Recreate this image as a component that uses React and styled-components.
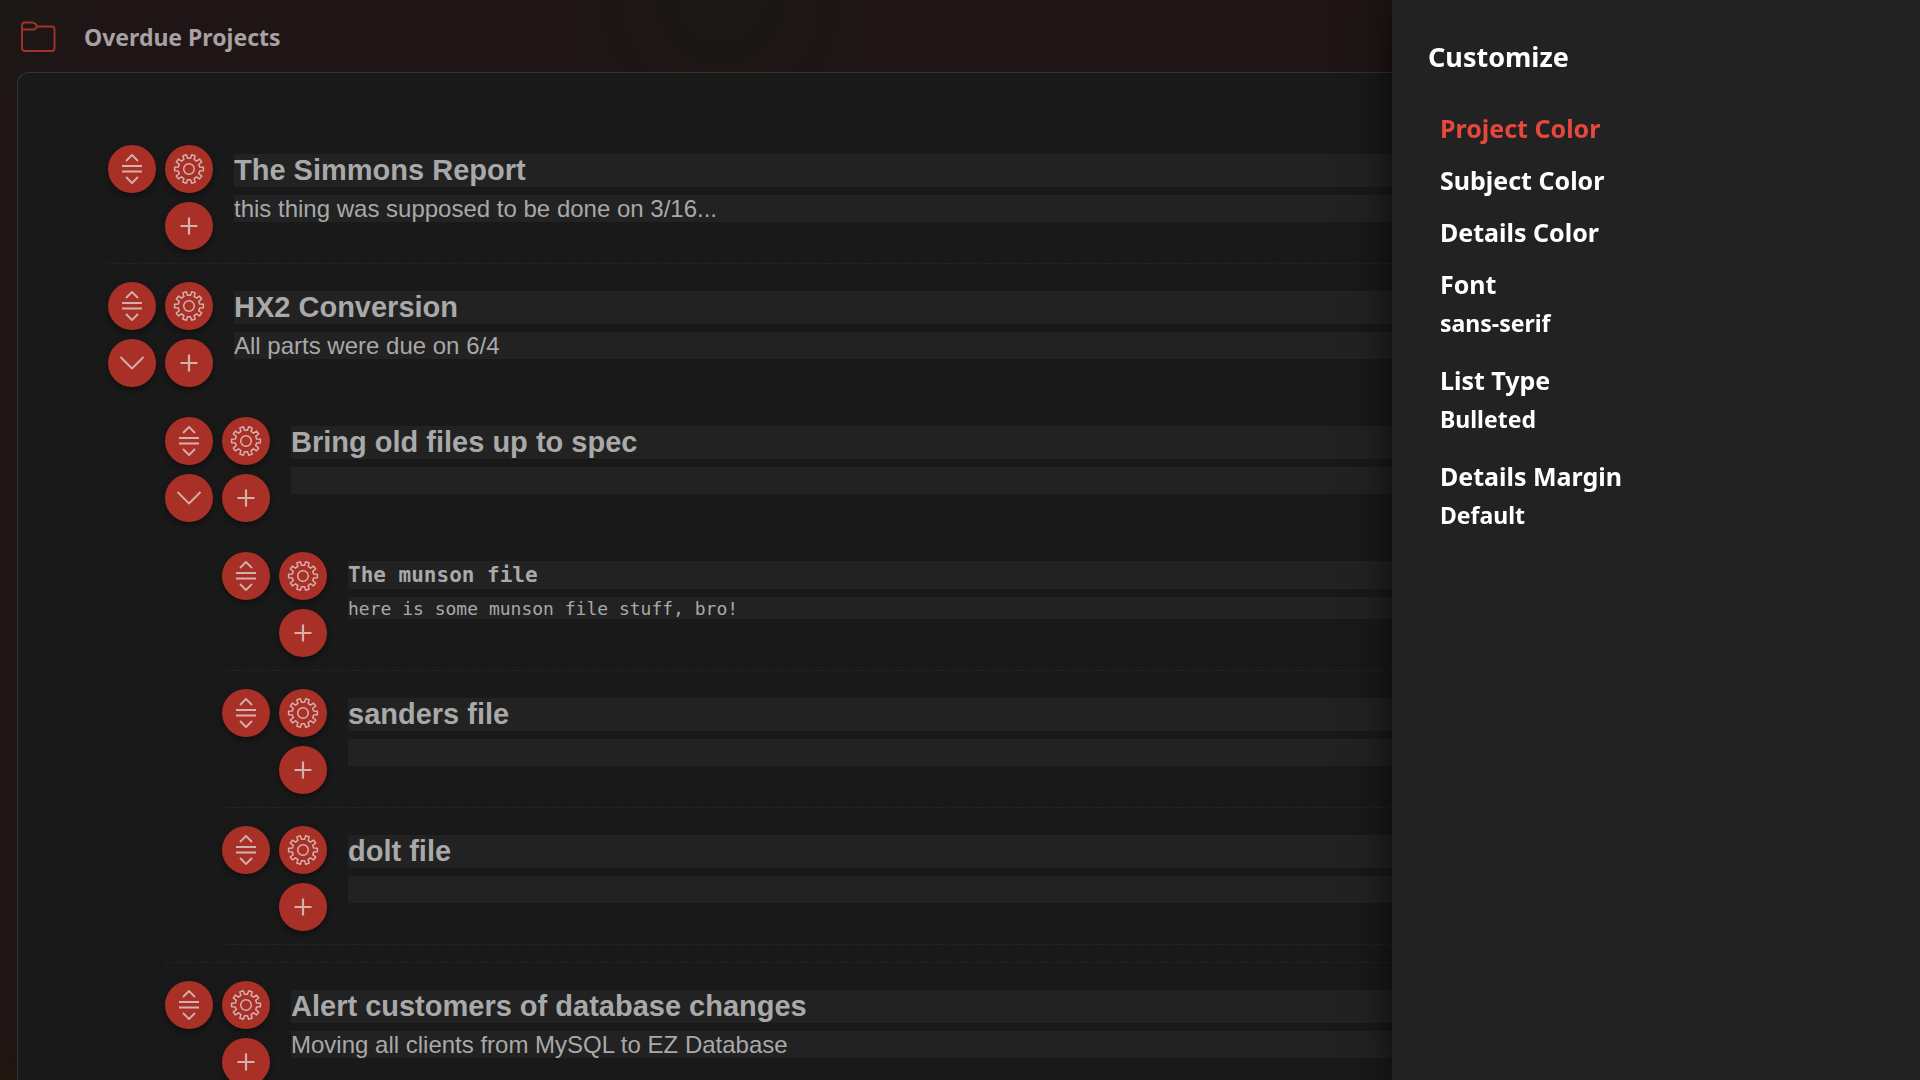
import React, { useState } from 'react';
import styled, { createGlobalStyle } from 'styled-components';

const GlobalStyle = createGlobalStyle`
  * {
    box-sizing: border-box;
  }

  body {
    margin: 0;
    background-color: #1f1516;
    font-family: "Noto Sans", "Open Sans", sans-serif;
  }
`;

const Page = styled.div`
  display: flex;
  flex-direction: column;
  height: 100vh;
  overflow: hidden;
  background:
    radial-gradient(circle at 720px 0, #1b1715 40px, transparent 150px),
    radial-gradient(circle at 0 0, #1c1816 20px, transparent 90px),
    radial-gradient(circle at 0 100%, #1f1610 20px, transparent 70px),
    #1f1516;
`;

const Header = styled.header`
  display: flex;
  flex: none;
  align-items: center;
  gap: 28px;
  height: 72px;
  padding: 2px 20px 0;
`;

const HeaderTitle = styled.h1`
  margin: 0;
  color: #a7a1a1;
  font-size: 23px;
  line-height: 32px;
`;

const Panel = styled.main`
  flex: 1;
  margin-left: 17px;
  padding: 54px 32px 0 90px;
  min-height: 0;
  overflow: hidden;
  border-top: 1px solid #333;
  border-left: 1px solid #333;
  border-top-left-radius: 12px;
  background-color: #191919;
`;

const List = styled.ul`
  margin: 0;
  padding: 0;
  list-style: none;
`;

const SubList = styled(List)`
  margin-top: 12px;
  padding-left: 57px;
`;

const Item = styled.li`
  padding-top: 18px;
  padding-bottom: ${({ $parent }) => ($parent ? '17px' : '13px')};
  border-bottom: 1px dashed #252525;
`;

const Row = styled.div`
  display: flex;
  gap: 21px;
`;

const Controls = styled.div`
  display: grid;
  flex: none;
  grid-template-columns: 48px 48px;
  grid-template-rows: 48px 48px;
  gap: 9px;
`;

const RoundButton = styled.button`
  display: flex;
  align-items: center;
  justify-content: center;
  padding: 0;
  border: none;
  border-radius: 50%;
  background-color: #a93026;
  box-shadow: 0 3px 6px rgba(0, 0, 0, 0.4);
  color: #d4b0ad;
  cursor: pointer;
`;

const AddButton = styled(RoundButton)`
  grid-column: 2;
`;

const Fields = styled.div`
  display: flex;
  flex: 1;
  flex-direction: column;
  gap: 8px;
  min-width: 0;
  padding-top: 9px;
`;

const Field = styled.input`
  width: 100%;
  padding: 0;
  border: none;
  outline: none;
  background-color: #222;
  color: #a9a9a9;
  font-family: ${({ $mono }) => ($mono ? '"DejaVu Sans Mono", monospace' : '"Liberation Sans", Arial, sans-serif')};
`;

const Subject = styled(Field)`
  height: ${({ $mono }) => ($mono ? '28px' : '33px')};
  font-size: ${({ $mono }) => ($mono ? '21px' : '29px')};
  font-weight: bold;
`;

const Details = styled(Field)`
  height: ${({ $mono }) => ($mono ? '22px' : '27px')};
  font-size: ${({ $mono }) => ($mono ? '18px' : '24px')};
`;

const Drawer = styled.aside`
  position: fixed;
  top: 0;
  right: 0;
  bottom: 0;
  width: 27.5%;
  padding: 38px 36px;
  background-color: #222;
  box-shadow: 0 0 40px rgba(0, 0, 0, 0.7);
  color: #fff;
`;

const DrawerTitle = styled.h2`
  margin: 0 0 26px;
  font-size: 27px;
  line-height: 38px;
`;

const Options = styled.div`
  display: flex;
  flex-direction: column;
  align-items: flex-start;
  padding-left: 12px;
`;

const ColorButton = styled.button`
  padding: 0;
  border: none;
  background: none;
  color: ${({ $active }) => ($active ? '#e6483d' : '#fff')};
  font-family: inherit;
  font-size: 25px;
  font-weight: bold;
  line-height: 52px;
  cursor: pointer;
`;

const Setting = styled.div`
  display: flex;
  flex-direction: column;
  align-items: flex-start;
  margin-bottom: 18px;
`;

const SettingLabel = styled.label`
  font-size: 25px;
  font-weight: bold;
  line-height: 52px;
`;

const SettingSelect = styled.select`
  height: 26px;
  padding: 0;
  border: none;
  outline: none;
  appearance: none;
  background: #222;
  color: #fff;
  font-family: inherit;
  font-size: 23px;
  font-weight: bold;
  line-height: 26px;
  cursor: pointer;
`;

// closed outline of a cog, teeth sit either side of the vertical axis
const cogPath = (teeth, outer, inner) => {
  const step = 360 / teeth;
  const point = (radius, angle) => {
    const rad = ((angle - 90) * Math.PI) / 180;
    return `${(Math.cos(rad) * radius).toFixed(2)} ${(Math.sin(rad) * radius).toFixed(2)}`;
  };
  const points = [];
  for (let i = 0; i < teeth; i += 1) {
    const mid = step / 2 + i * step;
    points.push(
      point(inner, mid - step * 0.28),
      point(outer, mid - step * 0.2),
      point(outer, mid + step * 0.2),
      point(inner, mid + step * 0.28),
    );
  }
  return `M${points.join('L')}Z`;
};

const COG = cogPath(10, 14.5, 10.8);

function Icon({ children, weight = 1.8 }) {
  return (
    <svg
      width="32"
      height="32"
      viewBox="-16 -16 32 32"
      fill="none"
      stroke="currentColor"
      strokeWidth={weight}
      strokeLinejoin="round"
      aria-hidden="true"
    >
      {children}
    </svg>
  );
}

const MoveIcon = () => (
  <Icon>
    <path d="M-6 -8L0 -14L6 -8M-10 -3H10M-10 2.5H10M-6 8L0 14L6 8" />
  </Icon>
);

const CogIcon = () => (
  <Icon weight={1.5}>
    <path d={COG} />
    <circle r="5.3" />
  </Icon>
);

const ChevronIcon = () => (
  <Icon>
    <path d="M-11.5 -6L0 5.5L11.5 -6" />
  </Icon>
);

const PlusIcon = () => (
  <Icon weight={2.2}>
    <path d="M-8.500 0H8.500M0 -8.500V8.500" />
  </Icon>
);

const FolderIcon = () => (
  <svg width="36" height="32" viewBox="0 0 36 32" fill="none" stroke="#a2332b" strokeWidth="1.9" aria-hidden="true">
    <path d="M2 9V4.500Q2 1.500 5 1.500H12Q14 1.500 15.500 3L17.500 5.500H31.500Q34.500 5.500 34.500 8.500V27Q34.500 30 31.500 30H5Q2 30 2 27V8.500H13Q15 8.500 16 7L17.500 5.500" />
  </svg>
);

const PROJECTS = [
  {
    id: 1,
    subject: 'The Simmons Report',
    details: 'this thing was supposed to be done on 3/16...',
  },
  {
    id: 2,
    subject: 'HX2 Conversion',
    details: 'All parts were due on 6/4',
    children: [
      {
        id: 3,
        subject: 'Bring old files up to spec',
        details: '',
        children: [
          { id: 4, subject: 'The munson file', details: 'here is some munson file stuff, bro!', mono: true },
          { id: 5, subject: 'sanders file', details: '' },
          { id: 6, subject: 'dolt file', details: '' },
        ],
      },
      {
        id: 7,
        subject: 'Alert customers of database changes',
        details: 'Moving all clients from MySQL to EZ Database',
      },
    ],
  },
];

const COLORS = ['Project Color', 'Subject Color', 'Details Color'];

const SETTINGS = [
  { id: 'font', label: 'Font', options: ['sans-serif', 'serif', 'monospace'] },
  { id: 'list-type', label: 'List Type', options: ['Bulleted', 'Numbered'] },
  { id: 'details-margin', label: 'Details Margin', options: ['Default', 'None'] },
];

function Project({ project }) {
  const [open, setOpen] = useState(true);
  const { subject, details, mono, children } = project;

  return (
    <Item $parent={Boolean(children)}>
      <Row>
        <Controls>
          <RoundButton aria-label="Move"><MoveIcon /></RoundButton>
          <RoundButton aria-label="Customize"><CogIcon /></RoundButton>
          {children && (
            <RoundButton aria-label="Toggle" onClick={() => setOpen(!open)}><ChevronIcon /></RoundButton>
          )}
          <AddButton aria-label="Add"><PlusIcon /></AddButton>
        </Controls>
        <Fields>
          <Subject aria-label="Subject" defaultValue={subject} $mono={mono} />
          <Details aria-label="Details" defaultValue={details} $mono={mono} />
        </Fields>
      </Row>
      {children && open && (
        <SubList>
          {children.map((child) => <Project key={child.id} project={child} />)}
        </SubList>
      )}
    </Item>
  );
}

function CustomizeDrawer() {
  const [active, setActive] = useState(COLORS[0]);

  return (
    <Drawer>
      <DrawerTitle>Customize</DrawerTitle>
      <Options>
        {COLORS.map((name) => (
          <ColorButton key={name} $active={name === active} onClick={() => setActive(name)}>
            {name}
          </ColorButton>
        ))}
        {SETTINGS.map(({ id, label, options }) => (
          <Setting key={id}>
            <SettingLabel htmlFor={id}>{label}</SettingLabel>
            <SettingSelect id={id}>
              {options.map((option) => <option key={option}>{option}</option>)}
            </SettingSelect>
          </Setting>
        ))}
      </Options>
    </Drawer>
  );
}

function App() {
  return (
    <>
      <GlobalStyle />
      <Page>
        <Header>
          <FolderIcon />
          <HeaderTitle>Overdue Projects</HeaderTitle>
        </Header>
        <Panel>
          <List>
            {PROJECTS.map((project) => <Project key={project.id} project={project} />)}
          </List>
        </Panel>
      </Page>
      <CustomizeDrawer />
    </>
  );
}

export default App;
